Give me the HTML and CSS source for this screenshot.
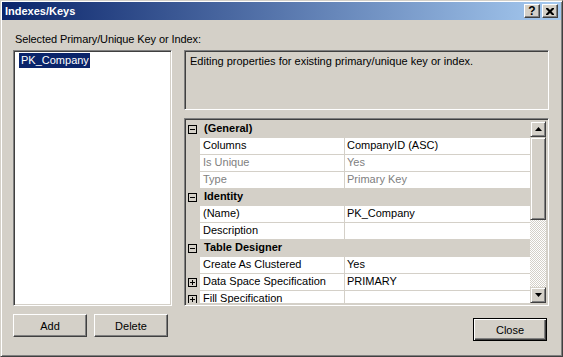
FILE: index.html
```html
<!DOCTYPE html>
<html lang="en">
<head>
  <meta charset="UTF-8" />
  <title>Indexes/Keys</title>
  <link rel="stylesheet" href="styles.css">
</head>
<body>
<div class="window">
  <div class="titlebar">
    <span class="title">Indexes/Keys</span>
    <div class="caption-btns">
      <div class="cap-btn help">?</div>
      <div class="cap-btn">
        <svg width="8" height="7" viewBox="0 0 8 7"><path d="M0 0h2l2 2 2-2h2v1l-2.5 2.5L8 6v1H6L4 5 2 7H0V6l2.5-2.5L0 1z" fill="#000"/></svg>
      </div>
    </div>
  </div>

  <div class="client">
    <div class="label">Selected Primary/Unique Key or Index:</div>
    <div class="main">
      <div class="left">
        <div class="listbox">
          <div class="item selected">PK_Company</div>
        </div>
        <div class="btn-row">
          <button class="btn">Add</button>
          <button class="btn">Delete</button>
        </div>
      </div>

      <div class="right">
        <div class="desc">Editing properties for existing primary/unique key or index.</div>
        <div class="propgrid">
          <div class="rows">
            <div class="row cat">
              <span class="gutter"><svg class="glyph" width="9" height="9"><rect x=".5" y=".5" width="8" height="8" fill="none" stroke="#000"/><path d="M2 4.5h5" stroke="#000"/></svg></span>
              <span class="cat-name">(General)</span>
            </div>
            <div class="row">
              <span class="gutter"></span><span class="name">Columns</span><span class="value">CompanyID (ASC)</span>
            </div>
            <div class="row dim">
              <span class="gutter"></span><span class="name">Is Unique</span><span class="value">Yes</span>
            </div>
            <div class="row dim">
              <span class="gutter"></span><span class="name">Type</span><span class="value">Primary Key</span>
            </div>
            <div class="row cat">
              <span class="gutter"><svg class="glyph" width="9" height="9"><rect x=".5" y=".5" width="8" height="8" fill="none" stroke="#000"/><path d="M2 4.5h5" stroke="#000"/></svg></span>
              <span class="cat-name">Identity</span>
            </div>
            <div class="row">
              <span class="gutter"></span><span class="name">(Name)</span><span class="value">PK_Company</span>
            </div>
            <div class="row">
              <span class="gutter"></span><span class="name">Description</span><span class="value"></span>
            </div>
            <div class="row cat">
              <span class="gutter"><svg class="glyph" width="9" height="9"><rect x=".5" y=".5" width="8" height="8" fill="none" stroke="#000"/><path d="M2 4.5h5" stroke="#000"/></svg></span>
              <span class="cat-name">Table Designer</span>
            </div>
            <div class="row">
              <span class="gutter"></span><span class="name">Create As Clustered</span><span class="value">Yes</span>
            </div>
            <div class="row">
              <span class="gutter"><svg class="glyph" width="9" height="9"><rect x=".5" y=".5" width="8" height="8" fill="none" stroke="#000"/><path d="M2 4.5h5M4.5 2v5" stroke="#000"/></svg></span><span class="name">Data Space Specification</span><span class="value">PRIMARY</span>
            </div>
            <div class="row">
              <span class="gutter"><svg class="glyph" width="9" height="9"><rect x=".5" y=".5" width="8" height="8" fill="none" stroke="#000"/><path d="M2 4.5h5M4.5 2v5" stroke="#000"/></svg></span><span class="name">Fill Specification</span><span class="value"></span>
            </div>
          </div>
          <div class="vscroll">
            <div class="sb-btn"><svg width="7" height="4"><path d="M3.5 0L7 4H0z" fill="#000"/></svg></div>
            <div class="sb-thumb"></div>
            <div class="sb-track"></div>
            <div class="sb-btn"><svg width="7" height="4"><path d="M0 0h7L3.5 4z" fill="#000"/></svg></div>
          </div>
        </div>
        <div class="close-row">
          <button class="btn default">Close</button>
        </div>
      </div>
    </div>
  </div>
</div>
</body>
</html>
```

FILE: styles.css
```css
* { box-sizing: border-box; }
body {
  margin: 0;
  font-family: "Liberation Sans", Arial, sans-serif;
  font-size: 11px;
  background: #d4d0c8;
  color: #000;
}
.window {
  width: 563px;
  height: 357px;
  padding: 1px;
  background: #d4d0c8;
  border: 1px solid;
  border-color: #d4d0c8 #404040 #404040 #d4d0c8;
  box-shadow: inset 1px 1px #fff, inset -1px -1px #808080;
}
.titlebar {
  height: 18px;
  display: flex;
  align-items: center;
  justify-content: space-between;
  padding: 0 3px 0 3px;
  background: linear-gradient(to right, #0a246a, #a6caf0);
}
.title {
  color: #fff;
  font-weight: bold;
  font-size: 11px;
}
.caption-btns {
  display: flex;
  gap: 2px;
}
.cap-btn {
  width: 16px;
  height: 14px;
  display: flex;
  align-items: center;
  justify-content: center;
  background: #d4d0c8;
  border: 1px solid;
  border-color: #fff #404040 #404040 #fff;
  box-shadow: inset -1px -1px #808080;
  font-weight: bold;
  font-size: 12px;
  line-height: 12px;
}
.client {
  padding: 13px 10px 0 11px;
}
.label {
  line-height: 13px;
  margin-left: 2px;
  letter-spacing: -0.1px;
}
.main {
  display: flex;
  gap: 12px;
  margin-top: 4px;
}
.left { width: 159px; }
.right { width: 365px; }
.listbox, .desc, .propgrid {
  border: 1px solid;
  border-color: #808080 #fff #fff #808080;
  box-shadow: inset 1px 1px #404040, inset -1px -1px #d4d0c8;
}
.listbox {
  height: 256px;
  background: #fff;
  padding: 2px 0 0 5px;
}
.item {
  display: inline-block;
  line-height: 15px;
  padding: 0 1px 0 2px;
}
.item.selected {
  background: #0a246a;
  color: #fff;
}
.btn-row {
  display: flex;
  gap: 7px;
  margin-top: 8px;
}
.btn {
  width: 74px;
  height: 23px;
  padding: 0;
  background: #d4d0c8;
  border: 1px solid;
  border-color: #fff #404040 #404040 #fff;
  box-shadow: inset -1px -1px #808080;
  font-family: "Liberation Sans", Arial, sans-serif;
  font-size: 11px;
  color: #000;
}
.btn.default {
  border-color: #000;
  box-shadow: inset 1px 1px #fff, inset -1px -1px #404040, inset -2px -2px #808080;
}
.desc {
  height: 60px;
  padding: 4px 5px;
  line-height: 13px;
}
.propgrid {
  height: 188px;
  margin-top: 8px;
  padding: 2px;
  display: flex;
  overflow: hidden;
}
.rows {
  flex: 1;
  overflow: hidden;
}
.row {
  display: flex;
  height: 17px;
  line-height: 15px;
  white-space: nowrap;
}
.gutter {
  width: 13px;
  flex: none;
  background: #d4d0c8;
  padding: 4px 0 0 1px;
}
.glyph { display: block; }
.name, .value {
  background: #fff;
  border-bottom: 1px solid #d4d0c8;
  overflow: hidden;
}
.name {
  width: 145px;
  flex: none;
  padding-left: 3px;
  border-right: 1px solid #d4d0c8;
}
.value {
  flex: 1;
  padding-left: 2px;
}
.dim .name, .dim .value { color: #808080; }
.cat {
  background: #d4d0c8;
}
.cat-name {
  font-weight: bold;
  padding: 0 0 0 4px;
}
.vscroll {
  width: 16px;
  flex: none;
  display: flex;
  flex-direction: column;
}
.sb-btn, .sb-thumb {
  background: #d4d0c8;
  border: 1px solid;
  border-color: #d4d0c8 #404040 #404040 #d4d0c8;
  box-shadow: inset 1px 1px #fff, inset -1px -1px #808080;
}
.sb-btn {
  height: 16px;
  flex: none;
  display: flex;
  align-items: center;
  justify-content: center;
}
.sb-btn svg { display: block; }
.sb-thumb {
  height: 83px;
  flex: none;
}
.sb-track {
  flex: 1;
  background-color: #d4d0c8;
  background-image: conic-gradient(#fff 25%, #d4d0c8 0 50%, #fff 0 75%, #d4d0c8 0);
  background-size: 2px 2px;
}
.close-row {
  display: flex;
  justify-content: flex-end;
  padding-right: 2px;
  margin-top: 12px;
}
```
